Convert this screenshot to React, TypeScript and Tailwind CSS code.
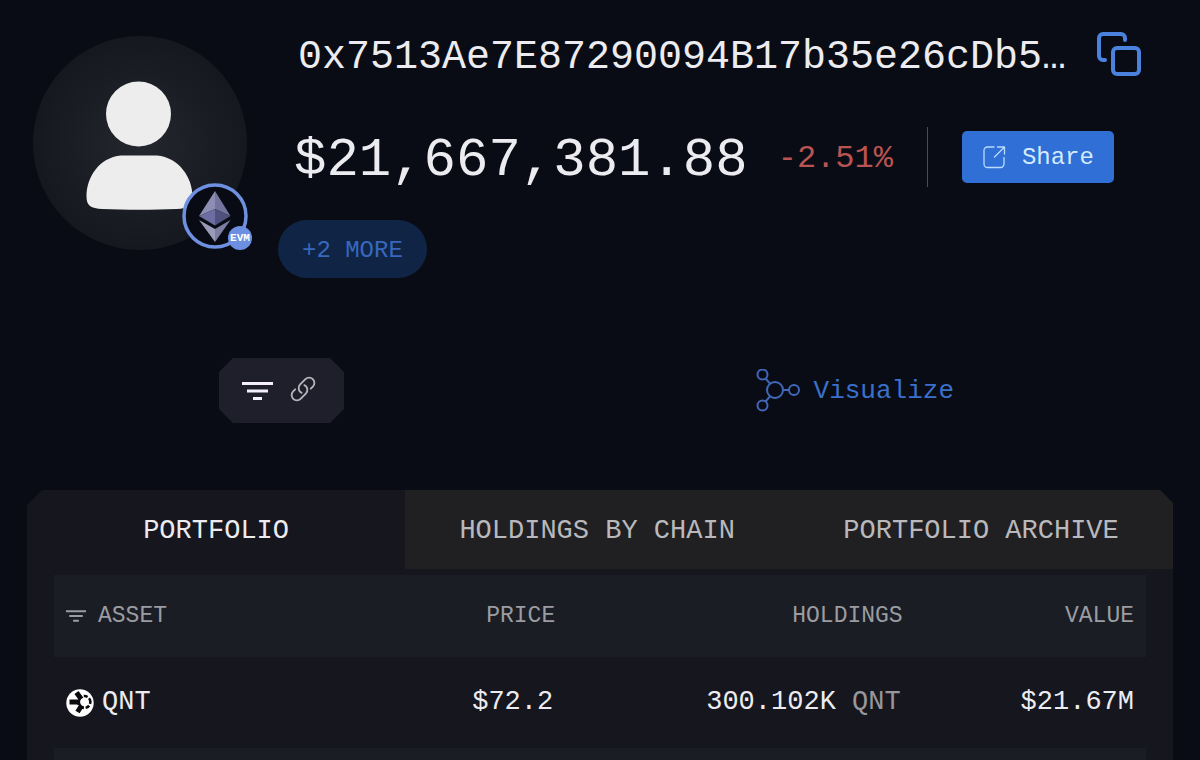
import { useState } from 'react';

const tabs = ['PORTFOLIO', 'HOLDINGS BY CHAIN', 'PORTFOLIO ARCHIVE'];

const assets = [{ symbol: 'QNT', price: '$72.2', amount: '300.102K', value: '$21.67M' }];

function UserIcon() {
  return (
    <svg viewBox="0 0 214 214" className="size-full" fill="#ededed" aria-hidden="true">
      <circle cx="105.500" cy="78" r="32.500" />
      <path d="M88 119.500h36c22 2 35.500 22 35.500 41 0 9-4 12-16 12.500-23 1-51 1-74 0-12-.5-16-3.500-16-12.500 0-19 12.500-39 34.500-41z" />
    </svg>
  );
}

function EvmIcon() {
  return (
    <svg viewBox="0 0 66 66" className="size-full" aria-hidden="true">
      <circle cx="33" cy="33" r="31" fill="#090b14" stroke="#6f90e0" strokeWidth="3.500" />
      <path d="M33 8 17 33l16-7z" fill="#8d8eb4" />
      <path d="m33 8 15.500 25L33 26z" fill="#74759e" />
      <path d="m17 33 16-7v16.500z" fill="#6c6da0" />
      <path d="M48.500 33 33 26v16.500z" fill="#50517e" />
      <path d="m17 37 16 9v13z" fill="#9a9ab9" />
      <path d="m48.500 37-15.500 9v13z" fill="#7d7ea3" />
    </svg>
  );
}

function CopyIcon() {
  return (
    <svg viewBox="0 0 44 44" className="size-11" fill="none" stroke="#4a82dd" strokeWidth="4" strokeLinecap="round" aria-hidden="true">
      <rect x="16" y="16" width="26" height="26" rx="4" />
      <path d="M28 8V6a4 4 0 0 0-4-4H6a4 4 0 0 0-4 4v18a4 4 0 0 0 4 4h2" />
    </svg>
  );
}

function ShareIcon() {
  return (
    <svg viewBox="0 0 24 24" className="size-6" fill="none" stroke="#b9dcff" strokeWidth="1.300" strokeLinecap="round" strokeLinejoin="round" aria-hidden="true">
      <path d="M12 2H5.500A3.500 3.500 0 0 0 2 5.500v13.500A3.500 3.500 0 0 0 5.500 22.500h13a3.500 3.500 0 0 0 3.500-3.500v-6.500" />
      <path d="M15.500 2H22.500V9M22.500 2 12.500 12" />
    </svg>
  );
}

function FilterIcon({ className }: { className: string }) {
  return (
    <svg viewBox="0 0 31 18" className={className} fill="currentColor" aria-hidden="true">
      <path d="M0 0h31v3H0zM5 7.500h21v3H5zM11 15h9v3h-9z" />
    </svg>
  );
}

function LinkIcon() {
  return (
    <svg viewBox="0 0 24 24" className="size-7" fill="none" stroke="#b4b3b9" strokeWidth="1.600" strokeLinecap="round" strokeLinejoin="round" aria-hidden="true">
      <path d="M13.190 8.688a4.500 4.500 0 0 1 1.242 7.244l-4.500 4.500a4.500 4.500 0 0 1-6.364-6.364l1.757-1.757" />
      <path d="M18.675 11.689l1.757-1.757a4.500 4.500 0 0 0-6.364-6.364l-4.500 4.500a4.500 4.500 0 0 0 1.242 7.244" />
    </svg>
  );
}

function GraphIcon() {
  return (
    <svg viewBox="0 0 44 44" className="size-11" fill="none" stroke="#4168b8" strokeWidth="2" aria-hidden="true">
      <circle cx="19" cy="21" r="8" />
      <circle cx="6.500" cy="5.500" r="5" />
      <circle cx="6.500" cy="36.500" r="5" />
      <circle cx="38" cy="21" r="5" />
      <path d="m9.500 9.500 4.500 5.200M9.500 32.500l4.500-5.200M27 21h6" />
    </svg>
  );
}

function QntIcon() {
  return (
    <svg viewBox="0 0 28 28" className="size-7 shrink-0" fill="none" stroke="#0b0b10" aria-hidden="true">
      <circle cx="14" cy="14" r="13.700" fill="#fff" stroke="none" />
      <path d="M3.500 13H15M10.500 3.500l5 7M11.500 23l5-8" strokeWidth="5" />
      <circle cx="18.300" cy="13" r="6" strokeWidth="2.600" strokeDasharray="4 1.800" strokeDashoffset="2" />
      <circle cx="18.300" cy="13" r="4.200" fill="#fff" stroke="none" />
    </svg>
  );
}

export default function App() {
  const [activeTab, setActiveTab] = useState('PORTFOLIO');

  return (
    <main className="flex h-screen flex-col overflow-hidden bg-[#090c14] font-['Liberation_Mono',monospace] text-[#ececf0]">
      <header className="flex px-[33px] pt-6">
        <div className="relative mt-3 size-[214px] shrink-0 rounded-full bg-[radial-gradient(circle,#24272d_0%,#1a1d24_45%,#101219_100%)]">
          <UserIcon />
          <div className="absolute -right-px bottom-px size-[66px]">
            <EvmIcon />
            <span className="absolute -right-1 -bottom-px flex size-6 items-center justify-center rounded-full bg-[#6c8fe2] text-[11px] font-bold text-white">
              EVM
            </span>
          </div>
        </div>

        <div className="ml-[31px] min-w-0 flex-1 pr-[26px]">
          <div className="flex items-center justify-between pl-5">
            <h1 className="truncate pt-2 text-[40px] leading-[52px]">0x7513Ae7E87290094B17b35e26cDb5…</h1>
            <button type="button" aria-label="Copy address" className="shrink-0 cursor-pointer">
              <CopyIcon />
            </button>
          </div>

          <div className="mt-[38px] flex items-center pl-4">
            <span className="pt-2 text-[54px] leading-[62px]">$21,667,381.88</span>
            <span className="ml-[30px] pt-1 text-[32px] leading-10 text-[#b85452]">-2.51%</span>
            <div className="ml-[34px] h-[60px] w-px bg-[#4a4c53]" />
            <button type="button" className="ml-[34px] flex h-[52px] cursor-pointer items-center gap-4 rounded-[5px] bg-[#2f6fd6] px-5 text-2xl text-[#d5eaff]">
              <ShareIcon />
              <span className="pt-0.5">Share</span>
            </button>
          </div>

          <button type="button" className="mt-7 h-[58px] cursor-pointer rounded-full bg-[#102445] px-6 pt-1 text-2xl text-[#3768be]">
            +2 MORE
          </button>
        </div>
      </header>

      <div className="mt-20 flex items-center justify-between pr-[246px] pl-[219px]">
        <div className="flex h-[65px] w-[125px] items-center gap-4 bg-[#1e1f2b] pl-[23px] [clip-path:polygon(14px_0,calc(100%-14px)_0,100%_14px,100%_calc(100%-14px),calc(100%-14px)_100%,14px_100%,0_calc(100%-14px),0_14px)]">
          <button type="button" aria-label="Filter" className="cursor-pointer text-[#f3f0fb]">
            <FilterIcon className="h-[18px] w-[31px]" />
          </button>
          <button type="button" aria-label="Link" className="cursor-pointer pb-1">
            <LinkIcon />
          </button>
        </div>
        <button type="button" className="flex cursor-pointer items-center gap-3.5 text-[26px] leading-8 text-[#3b70ca]">
          <GraphIcon />
          Visualize
        </button>
      </div>

      <section className="mx-[27px] mt-[67px] flex-1 bg-[#16161e] [clip-path:polygon(15px_0,calc(100%-13px)_0,100%_13px,100%_100%,0_100%,0_15px)]">
        <div role="tablist" className="flex h-[79px]">
          {tabs.map((tab) => (
            <button
              key={tab}
              type="button"
              role="tab"
              aria-selected={tab === activeTab}
              onClick={() => setActiveTab(tab)}
              className={
                tab === activeTab
                  ? 'w-[33%] cursor-pointer pt-1 text-[27px] text-[#ececf0]'
                  : 'flex-1 cursor-pointer bg-[#202023] pt-1 text-[27px] text-[#b9b9bd]'
              }
            >
              {tab}
            </button>
          ))}
        </div>

        <div className="px-[27px] pt-1.5">
          <table className="w-full table-fixed text-right">
            <thead className="bg-[#1a1d24] text-[23px] text-[#9b9ca1]">
              <tr className="h-[82px]">
                <th className="w-[30%] px-3 text-left font-normal">
                  <span className="flex items-center gap-3">
                    <FilterIcon className="h-3 w-5" />
                    ASSET
                  </span>
                </th>
                <th className="w-[17%] px-3 font-normal">PRICE</th>
                <th className="w-[32%] px-3.5 font-normal">HOLDINGS</th>
                <th className="w-[21%] px-3 font-normal">VALUE</th>
              </tr>
            </thead>
            <tbody className="text-[27px]">
              {assets.map((asset) => (
                <tr key={asset.symbol} className="h-[91px]">
                  <td className="px-3">
                    <span className="flex items-center gap-2">
                      <QntIcon />
                      {asset.symbol}
                    </span>
                  </td>
                  <td className="px-3.5">{asset.price}</td>
                  <td className="px-4">
                    {asset.amount} <span className="text-[#97979c]">{asset.symbol}</span>
                  </td>
                  <td className="px-3">{asset.value}</td>
                </tr>
              ))}
              <tr className="h-[91px] bg-[#1a1d24]">
                <td colSpan={4} />
              </tr>
            </tbody>
          </table>
        </div>
      </section>
    </main>
  );
}
